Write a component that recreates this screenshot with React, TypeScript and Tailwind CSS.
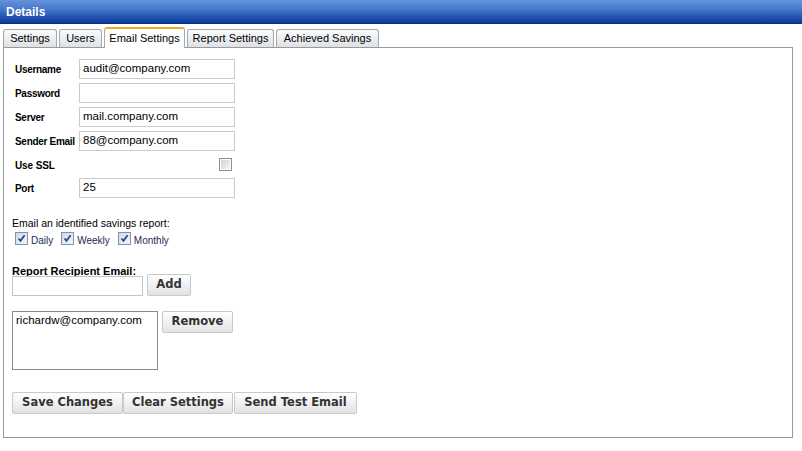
import React from "react";

const tabs = [
  { label: "Settings", w: "w-[54px]" },
  { label: "Users", w: "w-[43px]" },
  { label: "Email Settings", w: "w-[81px]", active: true },
  { label: "Report Settings", w: "w-[87px]" },
  { label: "Achieved Savings", w: "w-[103px]" },
];

const fields = [
  { label: "Username", value: "audit@company.com" },
  { label: "Password", value: "" },
  { label: "Server", value: "mail.company.com" },
  { label: "Sender Email", value: "88@company.com" },
];

function TextBox(props: { value: string; className?: string }) {
  return (
    <div
      className={
        "flex h-[20px] items-center border border-[#cbcbcb] bg-white pl-[3px] text-[11.5px] text-black " +
        (props.className ?? "")
      }
    >
      {props.value}
    </div>
  );
}

function Btn(props: { label: string; w: string }) {
  return (
    <div
      className={
        props.w +
        " flex h-[22px] items-center justify-center rounded-[2px] border border-[#c9c9c9] bg-[linear-gradient(to_bottom,#ffffff,#f1f1f1_50%,#e2e2e2)] font-['DejaVu_Sans',sans-serif] text-[11.5px] font-bold text-[#333]"
      }
    >
      {props.label}
    </div>
  );
}

function Check(props: { checked?: boolean }) {
  if (!props.checked) {
    return (
      <div className="flex h-[13px] w-[13px] items-center justify-center border border-[#8e8e8e] bg-white">
        <div className="h-[9px] w-[9px] bg-[linear-gradient(135deg,#d6d6d6,#f4f4f4)]" />
      </div>
    );
  }
  return (
    <div className="flex h-[13px] w-[13px] items-center justify-center border border-[#7f93ad] bg-[linear-gradient(135deg,#cfdaea,#f3f6fb)]">
      <svg width="9" height="9" viewBox="0 0 9 9">
        <path d="M1.5 4.5 L3.5 6.8 L7.6 1.2" fill="none" stroke="#2b4a86" strokeWidth="1.8" />
      </svg>
    </div>
  );
}

export default function App() {
  return (
    <div className="h-[451px] w-[802px] overflow-hidden bg-white font-['Liberation_Sans',Arial,sans-serif]">
      <div className="flex h-[24px] items-center border-b border-[#08307f] bg-[linear-gradient(to_bottom,#6594dc,#4677cc_40%,#2153b0_75%,#0d3b98)] pl-[6px] text-[12px] font-bold text-white">
        Details
      </div>

      <div className="px-[3px] pt-[3px]">
        <div className="relative z-10 flex h-[20px] items-end gap-[2px]">
          {tabs.map((t) =>
            t.active ? (
              <div
                key={t.label}
                className={
                  t.w +
                  " -mb-px flex h-[21px] items-center justify-center rounded-t-[3px] border border-b-0 border-[#a9a9a9] border-t-[#f0a830] border-t-2 bg-white text-[11px] text-black"
                }
              >
                {t.label}
              </div>
            ) : (
              <div
                key={t.label}
                className={
                  t.w +
                  " flex h-[18px] items-center justify-center rounded-t-[3px] border border-b-0 border-[#a3a8ae] bg-[linear-gradient(to_bottom,#fbfbfb,#e9ecef_60%,#dde1e6)] text-[11px] text-black"
                }
              >
                {t.label}
              </div>
            ),
          )}
        </div>

        <div className="h-[391px] w-[790px] border border-[#9a9a9a] pl-[8px] pt-[11px]">
          <div className="ml-[3px] grid w-[220px] grid-cols-[64px_156px] gap-y-[4px]">
            {fields.map((f) => (
              <React.Fragment key={f.label}>
                <div className="flex h-[20px] items-center pt-[1px] text-[10px] font-bold tracking-[-0.3px] text-black">
                  {f.label}
                </div>
                <TextBox value={f.value} />
              </React.Fragment>
            ))}
            <div className="flex h-[19px] items-center pt-[1px] text-[10px] font-bold tracking-[-0.1px] text-black">
              Use SSL
            </div>
            <div className="flex h-[19px] items-center justify-end pr-[3px]">
              <Check />
            </div>
            <div className="flex h-[20px] items-center pt-[1px] text-[10px] font-bold tracking-[-0.3px] text-black">
              Port
            </div>
            <TextBox value="25" />
          </div>

          <div className="mt-[19px] text-[10.5px] leading-[13px] text-black">
            Email an identified savings report:
          </div>
          <div className="mt-[1px] flex h-[14px] items-center pl-[3px] text-[10px] text-[#1c2c4f]">
            <Check checked />
            <span className="ml-[3px] mt-[4px]">Daily</span>
            <div className="ml-[8px]">
              <Check checked />
            </div>
            <span className="ml-[3px] mt-[4px]">Weekly</span>
            <div className="ml-[8px]">
              <Check checked />
            </div>
            <span className="ml-[3px] mt-[4px]">Monthly</span>
          </div>

          <div className="mt-[21px] text-[11px] font-bold leading-[11px] text-black">
            Report Recipient Email:
          </div>
          <div className="-mt-[3px] flex items-start gap-[4px]">
            <div className="mt-[2px] h-[20px] w-[131px] border border-[#c4c4c4] bg-white" />
            <Btn label="Add" w="w-[44px] h-[21px]" />
          </div>

          <div className="mt-[15px] flex items-start gap-[4px]">
            <div className="h-[59px] w-[146px] border border-[#8a8a8a] bg-white pl-[3px] pt-[1px] text-[11.5px] leading-[14px] text-black">
              richardw@company.com
            </div>
            <Btn label="Remove" w="w-[71px]" />
          </div>

          <div className="mt-[22px] flex">
            <Btn label="Save Changes" w="w-[111px]" />
            <Btn label="Clear Settings" w="w-[110px]" />
            <Btn label="Send Test Email" w="w-[123px] ml-[1px]" />
          </div>
        </div>
      </div>
    </div>
  );
}
